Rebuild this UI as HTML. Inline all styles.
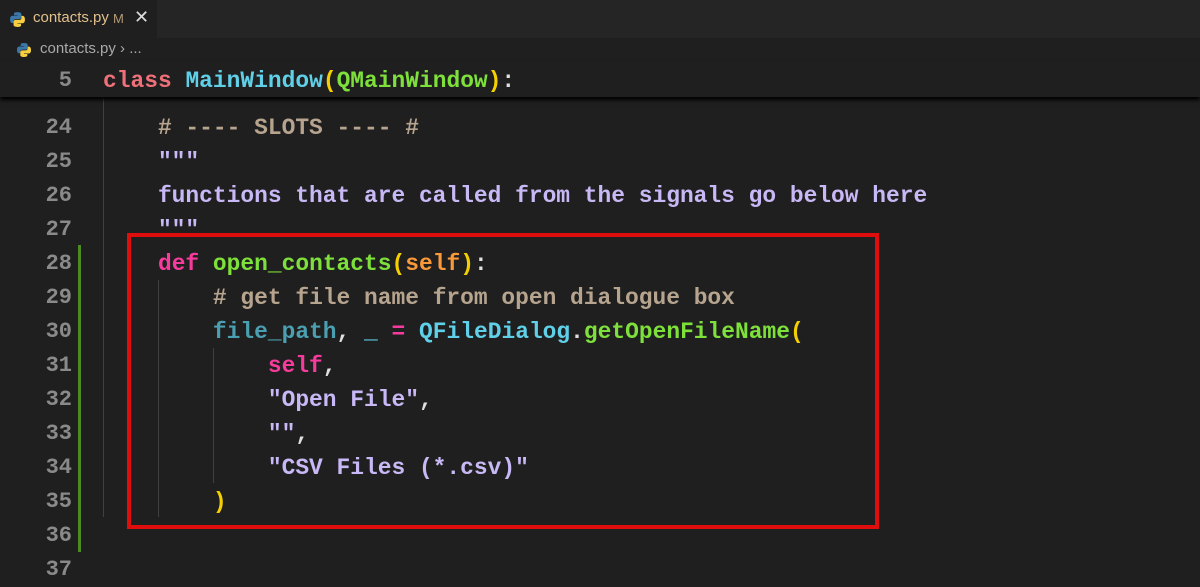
<!DOCTYPE html>
<html><head><style>
*{margin:0;padding:0;box-sizing:border-box}
body{width:1200px;height:586px;background:#1f1f1f;overflow:hidden;position:relative;font-family:"Liberation Sans",sans-serif}
.tabbar{position:absolute;left:0;top:0;width:1200px;height:38px;background:#252526}
.tab{position:absolute;left:0;top:0;width:157px;height:38px;background:#1f1f1f;color:#e2c08d;font-size:15px}
.bc{position:absolute;left:0;top:38px;width:1200px;height:24px;background:#1f1f1f;color:#a9a9a9;font-size:15px}
.code{font-family:"Liberation Mono",monospace;font-weight:bold;font-size:22.9px;white-space:pre;position:absolute;left:103px;line-height:34px}
.ln{position:absolute;left:0;width:72px;text-align:right;font-family:"Liberation Mono",monospace;font-weight:bold;font-size:22px;color:#8a8a8a;line-height:34px}
.kw{color:#f0707a}.cl{color:#5fd0e8}.gr{color:#7ee03a}.pa{color:#f5d000}.cm{color:#b6a48f}.st{color:#c8b8f5}.mg{color:#f73b9c}.or{color:#f89a3a}.tl{color:#4aa0b0}.wh{color:#e0e0e0}
.vl{position:absolute;width:1px;background:#404040}
</style></head><body>
<div class="tabbar"></div>
<div class="tab">
<svg style="position:absolute;left:9px;top:11px" width="17" height="17" viewBox="0 0 16 16"><path d="M7.9 1C4.5 1 4.7 2.5 4.7 2.5V4h3.3v.5H3.4S1 4.2 1 7.9s2.1 3.5 2.1 3.5h1.2V9.7s-.1-2.1 2-2.1h3.4s2 0 2-1.9V2.9S12 1 7.9 1z" fill="#3b77a8"/><path d="M8.1 15c3.4 0 3.2-1.5 3.2-1.5V12H8v-.5h4.6S15 11.8 15 8.1s-2.1-3.5-2.1-3.5h-1.2v1.7s.1 2.1-2 2.1H6.3s-2 0-2 1.9v2.8S4 15 8.1 15z" fill="#f7cf3f"/></svg>
<span style="position:absolute;left:33px;top:9px">contacts.py</span>
<span style="position:absolute;left:113px;top:11px;font-size:13px;color:#b39a73">M</span>
<span style="position:absolute;left:134px;top:7px;font-size:18px;color:#ddd">✕</span>
</div>
<div class="bc">
<svg style="position:absolute;left:16px;top:4px" width="16" height="16" viewBox="0 0 16 16"><path d="M7.9 1C4.5 1 4.7 2.5 4.7 2.5V4h3.3v.5H3.4S1 4.2 1 7.9s2.1 3.5 2.1 3.5h1.2V9.7s-.1-2.1 2-2.1h3.4s2 0 2-1.9V2.9S12 1 7.9 1z" fill="#3b77a8"/><path d="M8.1 15c3.4 0 3.2-1.5 3.2-1.5V12H8v-.5h4.6S15 11.8 15 8.1s-2.1-3.5-2.1-3.5h-1.2v1.7s.1 2.1-2 2.1H6.3s-2 0-2 1.9v2.8S4 15 8.1 15z" fill="#f7cf3f"/></svg>
<span style="position:absolute;left:40px;top:2px">contacts.py › ...</span>
</div>
<div class="vl" style="left:103px;top:97px;height:420px"></div>
<div class="vl" style="left:158px;top:280px;height:237px"></div>
<div class="vl" style="left:213px;top:348px;height:135px"></div>
<div style="position:absolute;left:78px;top:245px;width:3px;height:307px;background:#4b8b1f"></div>
<div class="ln" style="top:111px">24<br>25<br>26<br>27<br>28<br>29<br>30<br>31<br>32<br>33<br>34<br>35<br>36<br>37</div>
<div class="code" style="top:111px"><span class="cm">    # ---- SLOTS ---- #</span>
<span class="st">    """</span>
<span class="st">    functions that are called from the signals go below here</span>
<span class="st">    """</span>
    <span class="mg">def</span> <span class="gr">open_contacts</span><span class="pa">(</span><span class="or">self</span><span class="pa">)</span><span class="wh">:</span>
        <span class="cm"># get file name from open dialogue box</span>
        <span class="tl">file_path</span><span class="wh">,</span> <span class="cl">_</span> <span class="mg">=</span> <span class="cl">QFileDialog</span><span class="wh">.</span><span class="gr">getOpenFileName</span><span class="pa">(</span>
            <span class="mg">self</span><span class="wh">,</span>
            <span class="st">"Open File"</span><span class="wh">,</span>
            <span class="st">""</span><span class="wh">,</span>
            <span class="st">"CSV Files (*.csv)"</span>
        <span class="pa">)</span>
</div>
<div style="position:absolute;left:0;top:62px;width:1200px;height:35px;background:#1f1f1f;box-shadow:0 3px 4px #000"></div>
<div class="ln" style="top:64px">5</div>
<div class="code" style="top:64px"><span class="kw">class</span> <span class="cl">MainWindow</span><span class="pa">(</span><span class="gr">QMainWindow</span><span class="pa">)</span><span class="wh">:</span></div>
<div style="position:absolute;left:127px;top:233px;width:752px;height:296px;border:4px solid #e00d0d"></div>
</body></html>
